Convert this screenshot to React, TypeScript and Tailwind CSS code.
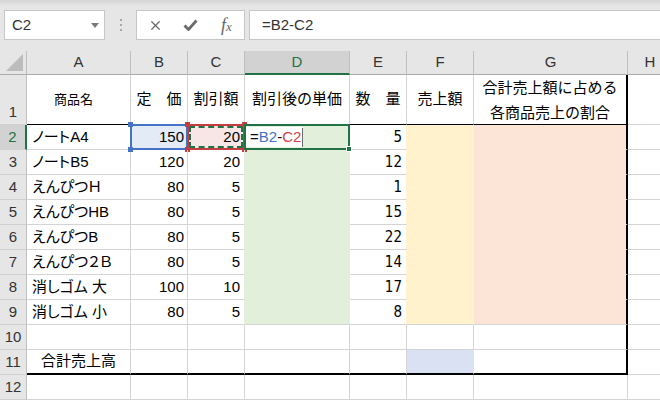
import React from 'react';
import { X } from 'lucide-react';

const sans = "font-['Liberation_Sans','Noto_Sans_CJK_JP',sans-serif]";

const rows = [
  { n: 2, a: 'ノートA4', b: 150, c: 20, e: 5 },
  { n: 3, a: 'ノートB5', b: 120, c: 20, e: 12 },
  { n: 4, a: 'えんぴつＨ', b: 80, c: 5, e: 1 },
  { n: 5, a: 'えんぴつHB', b: 80, c: 5, e: 15 },
  { n: 6, a: 'えんぴつB', b: 80, c: 5, e: 22 },
  { n: 7, a: 'えんぴつ２Ｂ', b: 80, c: 5, e: 14 },
  { n: 8, a: '消しゴム 大', b: 100, c: 10, e: 17 },
  { n: 9, a: '消しゴム 小', b: 80, c: 5, e: 8 },
];

const rowHead =
  'bg-[#e6e6e6] border-r border-b border-r-[#bfbfbf] border-b-[#d0d0d0] flex items-center justify-center text-[15px] text-[#333]';
const grid = 'border-r border-b border-[#d4d4d4]';
const num = 'flex items-center justify-end text-[15px]';

function Handle({ pos, color }: { pos: string; color: string }) {
  return <div className={`absolute w-[5px] h-[5px] ${pos} ${color}`} />;
}

function FormulaBar() {
  return (
    <div className="h-[51px] flex items-start pt-[10px] pl-[4px] bg-[linear-gradient(#d4d4d4,#e6e6e6_6px)]">
      <div className="w-[101px] h-[30px] bg-white border border-[#c6c6c6] flex items-center justify-between pl-[7px] pr-[5px]">
        <span className="text-[15px] text-[#333]">C2</span>
        <svg width="8" height="5" viewBox="0 0 8 5">
          <path d="M0 0h8L4 5z" fill="#7a7a7a" />
        </svg>
      </div>
      <div className="w-[31px] h-[30px] flex flex-col items-center justify-center gap-[3px]">
        <div className="w-[2px] h-[2px] bg-[#a8a8a8]" />
        <div className="w-[2px] h-[2px] bg-[#a8a8a8]" />
        <div className="w-[2px] h-[2px] bg-[#a8a8a8]" />
      </div>
      <div className="w-[109px] h-[30px] bg-white border border-[#c6c6c6] flex items-center pl-px text-[#6b6b6b]">
        <div className="w-[36px] flex justify-center">
          <X size={15} strokeWidth={2} />
        </div>
        <div className="w-[36px] flex justify-center">
          <svg width="15" height="12" viewBox="0 0 15 12">
            <path d="M1.5 6.5 L5.5 10.5 L13.5 1.5" fill="none" stroke="#6b6b6b" strokeWidth="2.8" />
          </svg>
        </div>
        <div className="w-[36px] flex justify-center items-baseline font-['Liberation_Serif',serif] italic text-[#666]">
          <span className="text-[18px] leading-none">f</span>
          <span className="text-[13px] leading-none">x</span>
        </div>
      </div>
      <div className="ml-[4px] flex-1 h-[30px] bg-white border border-r-0 border-[#c6c6c6] flex items-center pl-[12px] text-[15px] text-[#333]">
        =B2-C2
      </div>
    </div>
  );
}

function Sheet() {
  const cols = ['A', 'B', 'C', 'D', 'E', 'F', 'G', 'H'];
  return (
    <div className="grid grid-cols-[27px_104px_57px_57px_105px_57px_67px_154px_45px] grid-rows-[24px_50px_repeat(11,25px)]">
      {/* column headers */}
      <div className="bg-[#e6e6e6] border-r border-b border-r-[#bfbfbf] border-b-[#ababab] flex items-end justify-end pr-[3px] pb-[3px]">
        <svg width="17" height="17" viewBox="0 0 17 17">
          <path d="M17 0V17H0z" fill="#bcbcbc" />
        </svg>
      </div>
      {cols.map((c) =>
        c === 'D' ? (
          <div
            key={c}
            className="bg-[#d2d2d2] border-r border-b-2 border-r-[#bfbfbf] border-b-[#217346] flex items-center justify-center text-[15px] text-[#217346]"
          >
            {c}
          </div>
        ) : (
          <div
            key={c}
            className="bg-[#e6e6e6] border-r border-b border-r-[#bfbfbf] border-b-[#ababab] flex items-center justify-center text-[15px] text-[#333]"
          >
            {c}
          </div>
        )
      )}

      {/* row 1 */}
      <div className={`${rowHead} !items-end leading-[25px]`}>1</div>
      <div className="border-r border-b border-r-[#d4d4d4] border-b-black flex items-center justify-center pr-[10px] text-[13px]">商品名</div>
      <div className="border-r border-b border-r-[#d4d4d4] border-b-black flex items-center justify-center text-[15px]">定　価</div>
      <div className="border-r border-b border-r-[#d4d4d4] border-b-black flex items-center justify-center text-[15px]">割引額</div>
      <div className="border-r border-b border-r-[#d4d4d4] border-b-black flex items-center justify-center text-[15px]">割引後の単価</div>
      <div className="border-r border-b border-r-[#d4d4d4] border-b-black flex items-center justify-center text-[15px]">数　量</div>
      <div className="border-r border-b border-r-[#d4d4d4] border-b-black flex items-center justify-center text-[15px]">売上額</div>
      <div className="border-r-2 border-b border-r-black border-b-black flex flex-col items-center justify-center text-[15px] leading-[25px]">
        <span>合計売上額に占める</span>
        <span>各商品売上の割合</span>
      </div>
      <div className={grid} />

      {/* rows 2-9 */}
      {rows.map((r) => {
        const last = r.n === 9;
        const first = r.n === 2;
        return (
          <React.Fragment key={r.n}>
            {first ? (
              <div className="bg-[#d2d2d2] border-r-2 border-b border-r-[#217346] border-b-[#d0d0d0] flex items-center justify-center text-[15px] text-[#217346]">
                2
              </div>
            ) : (
              <div className={rowHead}>{r.n}</div>
            )}
            <div className={`${grid} flex items-center pl-[5px] text-[15px] whitespace-nowrap [font-feature-settings:'palt']`}>
              {r.a}
            </div>
            <div className={`${grid} ${num} pr-[3px] relative ${first ? 'bg-[#e3ebf6]' : ''}`}>
              {r.b}
              {first && (
                <div className="absolute -inset-px border-2 border-[#4472c4]">
                  <Handle pos="-left-[4px] -top-[4px]" color="bg-[#4472c4]" />
                  <Handle pos="-left-[4px] -bottom-[4px]" color="bg-[#4472c4]" />
                </div>
              )}
            </div>
            <div className={`border-r border-b border-r-[#e2efda] border-b-[#d4d4d4] ${num} pr-[4px] relative ${first ? 'bg-[#f8e6e6]' : ''}`}>
              {r.c}
              {first && (
                <div className="absolute -inset-px border-2 border-[#c43d43]">
                  <div className="absolute inset-0 border-2 border-dashed border-[#217346]" />
                  <Handle pos="-left-[4px] -top-[4px]" color="bg-[#c43d43]" />
                  <Handle pos="-left-[4px] -bottom-[4px]" color="bg-[#c43d43]" />
                  <Handle pos="-right-[4px] -top-[4px]" color="bg-[#c43d43]" />
                  <Handle pos="-right-[4px] -bottom-[4px]" color="bg-[#c43d43]" />
                </div>
              )}
            </div>
            {first ? (
              <div className="relative bg-[#e2efda] border-r border-b border-[#e2efda] flex items-stretch">
                <div className="flex items-center bg-white pl-[5px] my-[2px] text-[15px]">
                  <span>=</span>
                  <span className="text-[#4472c4]">B2</span>
                  <span>-</span>
                  <span className="text-[#d0434b]">C2</span>
                  <span className="ml-px w-px h-[19px] bg-[#6a6a6a]" />
                </div>
                <div className="absolute -inset-px border-2 border-[#217346]">
                  <div className="absolute -right-[4px] -bottom-[4px] w-[6px] h-[6px] bg-[#217346] border border-white" />
                </div>
              </div>
            ) : (
              <div
                className={`bg-[#e2efda] border-r border-b border-r-[#e2efda] ${last ? 'border-b-[#d4d4d4]' : 'border-b-[#e2efda]'}`}
              />
            )}
            <div className="border-r border-b border-r-[#fff2cc] border-b-[#d4d4d4] flex items-center justify-end pr-[4px] text-[15px] font-['DejaVu_Sans_Condensed','DejaVu_Sans',sans-serif]">
              {r.e}
            </div>
            <div
              className={`bg-[#fff2cc] border-r border-b border-r-[#fff2cc] ${last ? 'border-b-[#d4d4d4]' : 'border-b-[#fff2cc]'}`}
            />
            <div
              className={`bg-[#fce4d6] border-r-2 border-b border-r-black ${last ? 'border-b-[#d4d4d4]' : 'border-b-[#fce4d6]'}`}
            />
            <div className={grid} />
          </React.Fragment>
        );
      })}

      {/* row 10 */}
      <div className={rowHead}>10</div>
      <div className={grid} />
      <div className={grid} />
      <div className={grid} />
      <div className={grid} />
      <div className={grid} />
      <div className={grid} />
      <div className="border-r-2 border-b border-r-black border-b-[#d4d4d4]" />
      <div className={grid} />

      {/* row 11 */}
      <div className={rowHead}>11</div>
      <div className="border-r border-b-2 border-r-[#d4d4d4] border-b-black flex items-center justify-center text-[15px]">合計売上高</div>
      <div className="border-r border-b-2 border-r-[#d4d4d4] border-b-black" />
      <div className="border-r border-b-2 border-r-[#d4d4d4] border-b-black" />
      <div className="border-r border-b-2 border-r-[#d4d4d4] border-b-black" />
      <div className="border-r border-b-2 border-r-[#d4d4d4] border-b-black" />
      <div className="bg-[#d9e1f2] border-r border-b-2 border-r-[#d9e1f2] border-b-black" />
      <div className="border-r-2 border-b-2 border-black" />
      <div className={grid} />

      {/* row 12 */}
      <div className={rowHead}>12</div>
      {cols.map((c) => (
        <div key={c} className={grid} />
      ))}
    </div>
  );
}

export default function App() {
  return (
    <div className={`w-[660px] h-[402px] overflow-hidden bg-white text-black ${sans}`}>
      <FormulaBar />
      <Sheet />
    </div>
  );
}
